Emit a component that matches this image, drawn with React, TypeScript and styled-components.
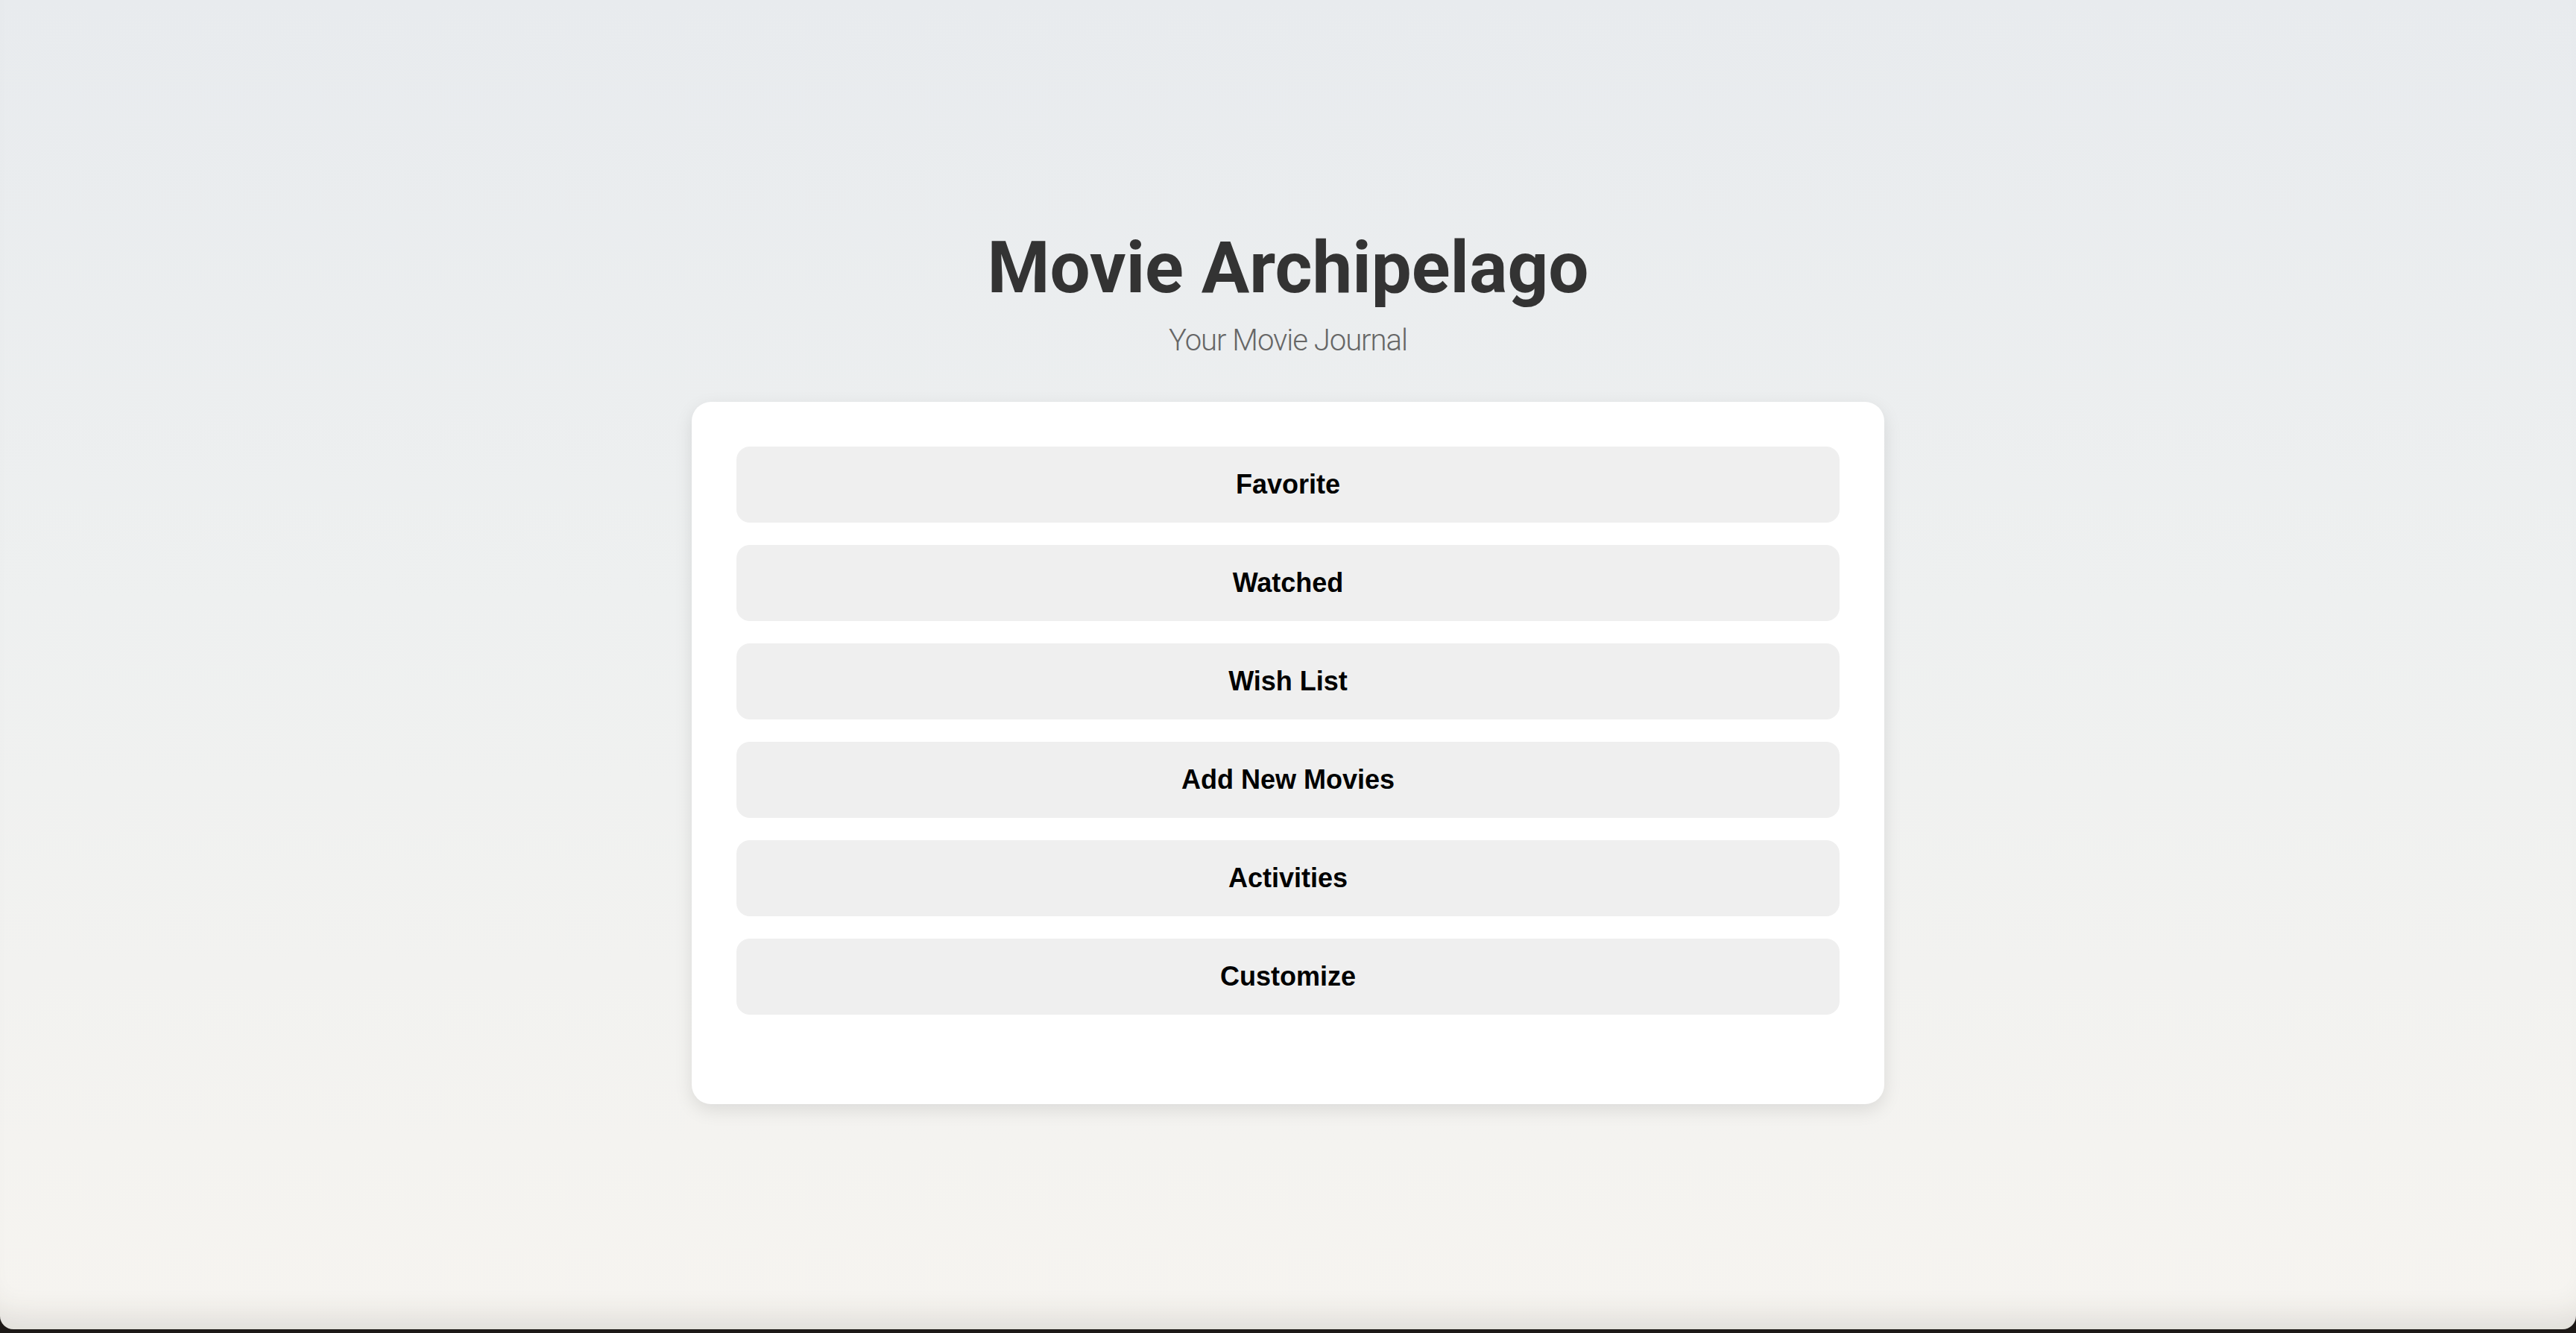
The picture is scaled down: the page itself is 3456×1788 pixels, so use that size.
import React from "react";
import styled, { createGlobalStyle } from "styled-components";

const GlobalStyle = createGlobalStyle`
  html, body {
    margin: 0;
    padding: 0;
    background: #1d1917;
  }
  * { box-sizing: border-box; }
`;

const Frame = styled.div`
  height: 1788px;
  padding-bottom: 5px;
  background: #1d1917;
`;

const Window = styled.main`
  height: 1783px;
  display: flex;
  flex-direction: column;
  align-items: center;
  justify-content: center;
  background: linear-gradient(to bottom, #e8ebee 0%, #eef0f0 45%, #f6f4f0 100%);
  border-radius: 0 0 18px 18px;
  box-shadow: inset 0 -46px 40px -30px rgba(60, 50, 40, 0.12);
  overflow: hidden;
`;

const Title = styled.h1`
  margin: 0;
  font-family: Roboto, "Liberation Sans", sans-serif;
  font-weight: 700;
  font-size: 96px;
  line-height: normal;
  color: #333333;
`;

const Subtitle = styled.p`
  margin: 18px 0 59px;
  font-family: Roboto, "Liberation Sans", sans-serif;
  font-weight: 300;
  font-size: 40px;
  letter-spacing: -1px;
  line-height: normal;
  color: #666666;
`;

const Card = styled.section`
  width: 1600px;
  padding: 60px 60px 120px;
  background: #ffffff;
  border-radius: 26px;
  box-shadow: 0 8px 24px rgba(0, 0, 0, 0.1);
  display: flex;
  flex-direction: column;
  gap: 30px;
`;

const MenuButton = styled.button`
  height: 102px;
  width: 100%;
  border: none;
  border-radius: 18px;
  background: #efefef;
  color: #000000;
  font-family: "Liberation Sans", Arial, sans-serif;
  font-weight: 700;
  font-size: 36px;
  display: flex;
  align-items: center;
  justify-content: center;
  cursor: pointer;
`;

const items = ["Favorite", "Watched", "Wish List", "Add New Movies", "Activities", "Customize"];

export default function App() {
  return (
    <>
      <GlobalStyle />
      <Frame>
        <Window>
          <Title>Movie Archipelago</Title>
          <Subtitle>Your Movie Journal</Subtitle>
          <Card>
            {items.map((label) => (
              <MenuButton key={label}>{label}</MenuButton>
            ))}
          </Card>
        </Window>
      </Frame>
    </>
  );
}
